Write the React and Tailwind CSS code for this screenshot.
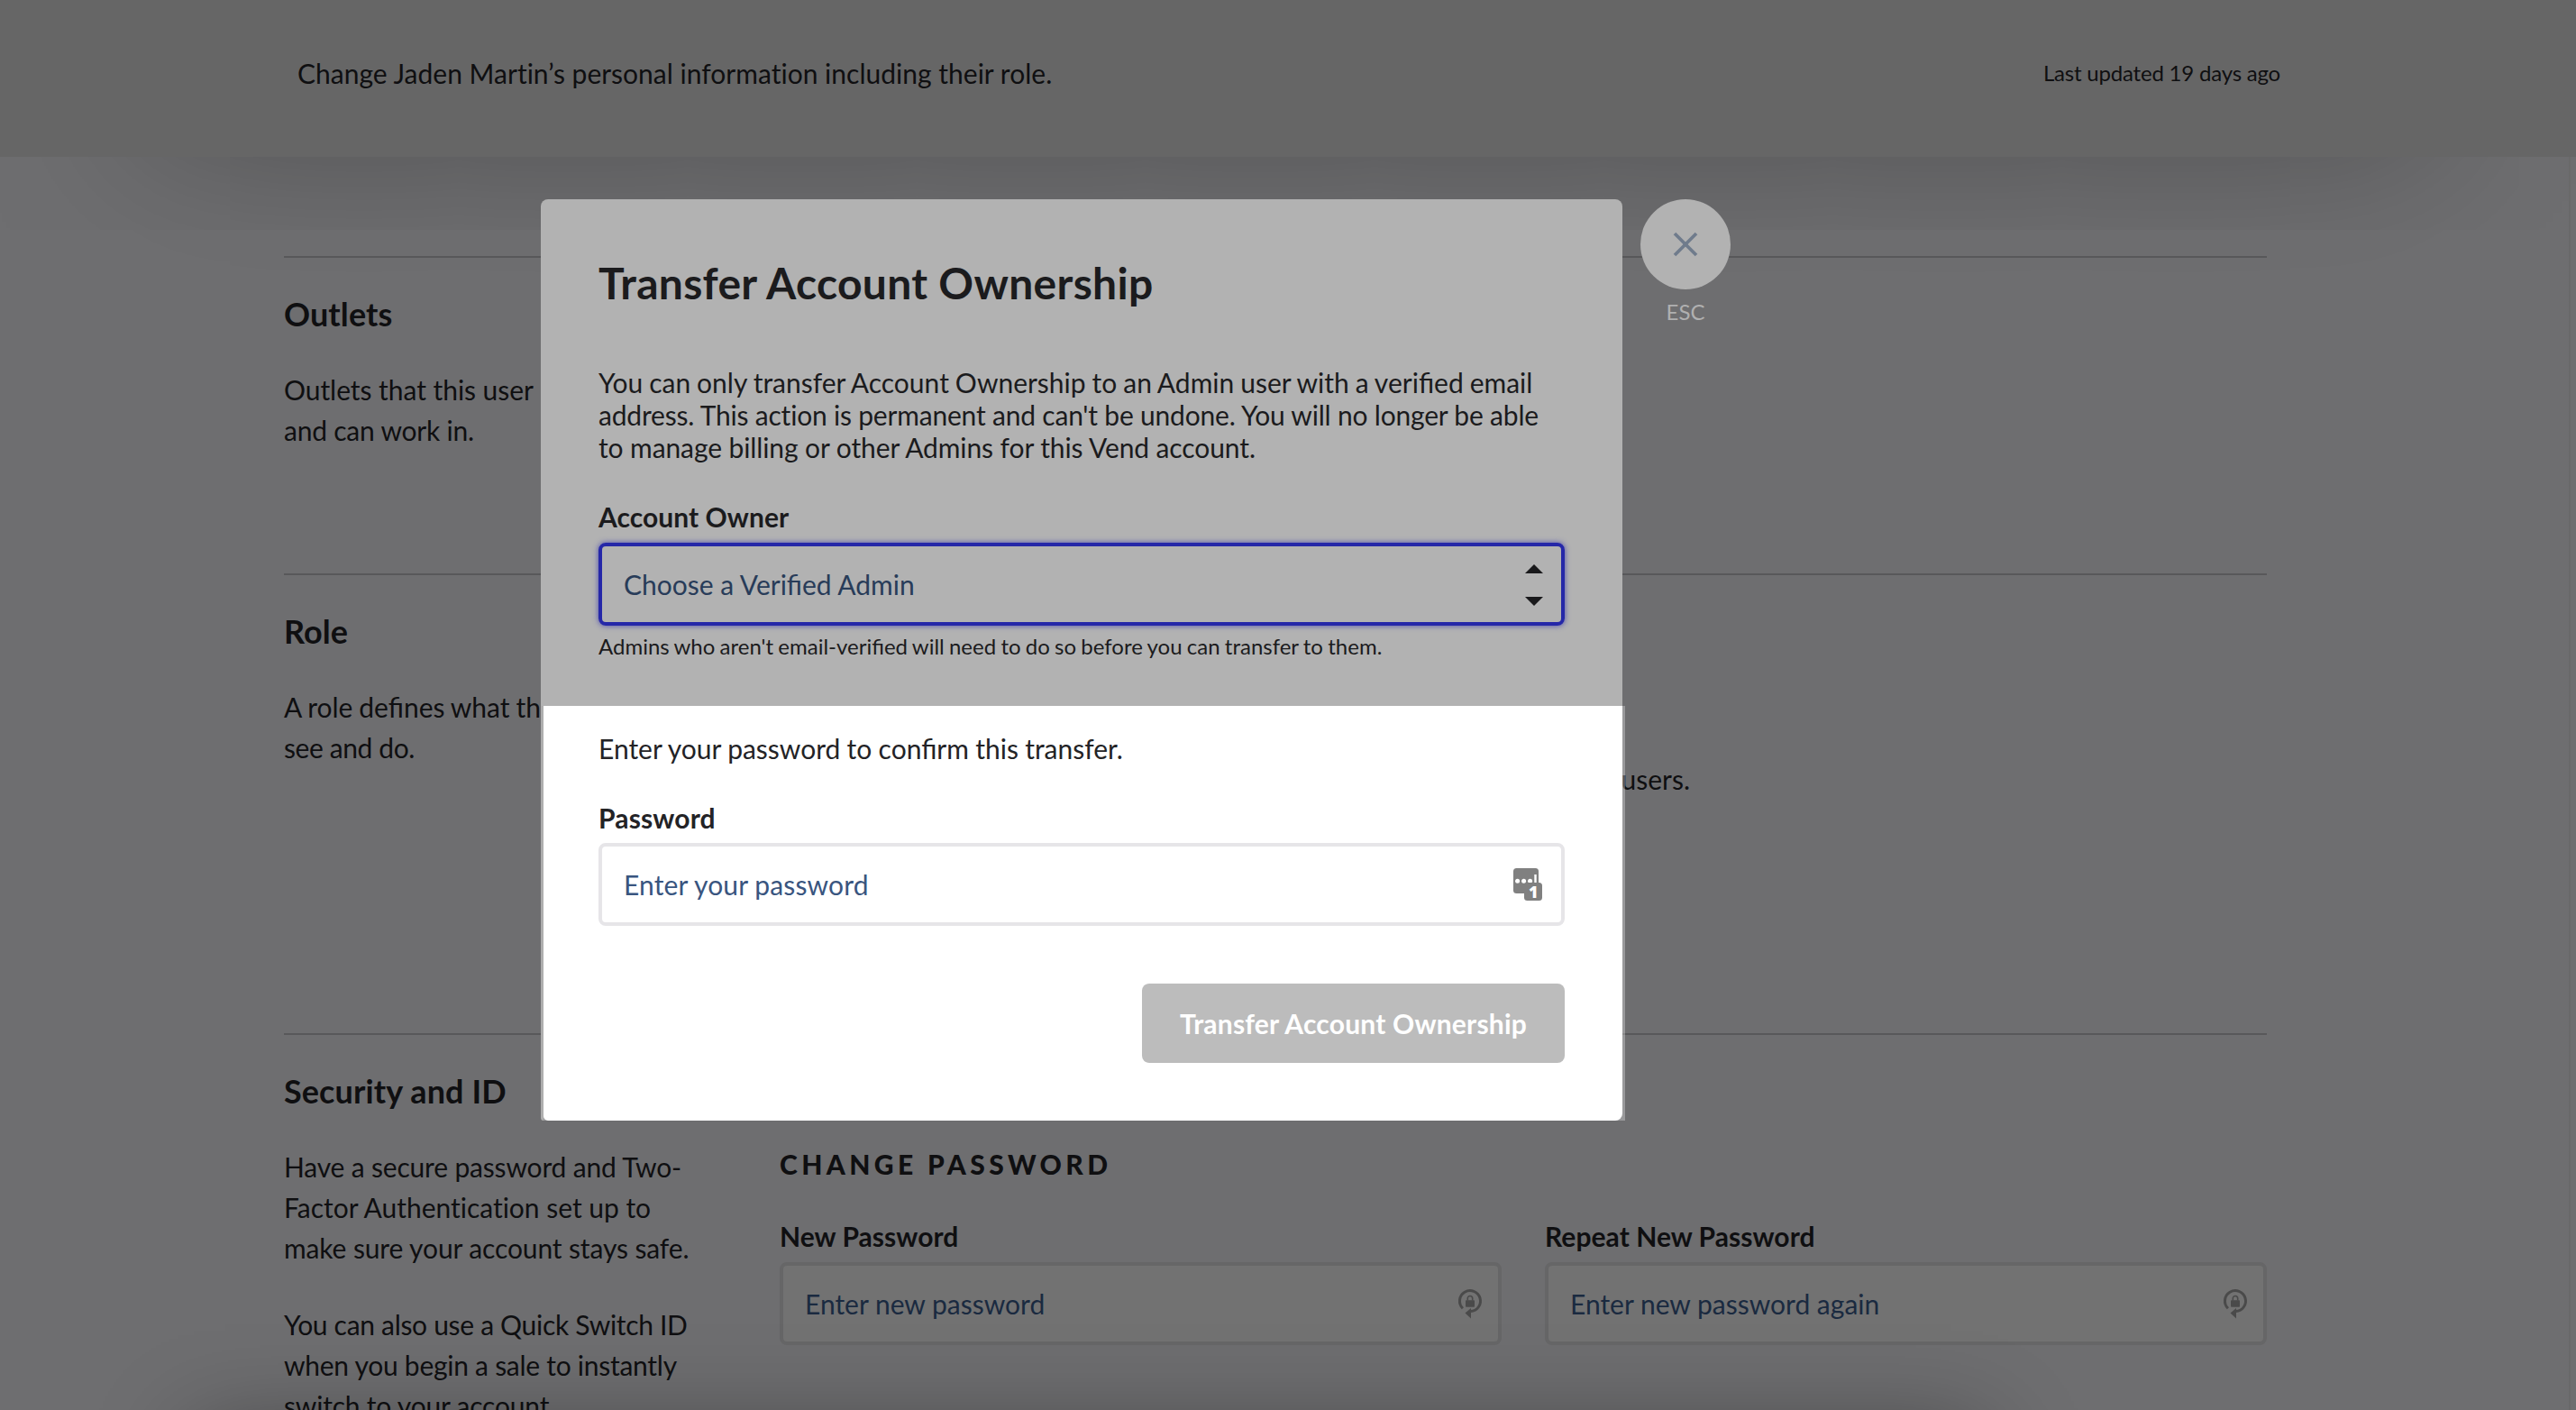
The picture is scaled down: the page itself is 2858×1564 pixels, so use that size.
import React from "react";
import { X } from "lucide-react";

function Section({ title, className, children }) {
  return (
    <div className={"border-t-2 border-[#58585a] " + className}>
      <div className="w-[500px] text-[30px] leading-[45px] whitespace-nowrap">
        <h2 className="mt-[37px] mb-[37px] text-[36px] leading-[50px] font-bold tracking-[0.1px]">
          {title}
        </h2>
        {children}
      </div>
    </div>
  );
}

function RotateLock() {
  return (
    <svg className="h-[36px] w-[30px]" viewBox="0 0 30 36" fill="none">
      <path
        d="M6.9 23.3 A11.5 11.5 0 1 1 15.5 26.6"
        stroke="#4a4a4a"
        strokeWidth="3"
      />
      <path d="M9.5 28.5 L16 23 L16 34.5 Z" fill="#4a4a4a" />
      <rect x="10" y="14.2" width="10" height="7.6" rx="0.8" fill="#4a4a4a" />
      <path
        d="M12.3 14.5 V12.2 A2.7 2.7 0 0 1 17.7 12.2 V14.5"
        stroke="#4a4a4a"
        strokeWidth="1.6"
      />
    </svg>
  );
}

function PasswordManager() {
  return (
    <svg className="h-[36px] w-[32px]" viewBox="0 0 32 36">
      <rect width="28" height="28" rx="3.5" fill="#808080" />
      <circle cx="4.6" cy="14.2" r="2.5" fill="#fff" />
      <circle cx="11.6" cy="14.2" r="2.5" fill="#fff" />
      <circle cx="18.6" cy="14.2" r="2.5" fill="#fff" />
      <rect x="23.3" y="7" width="2.4" height="10" fill="#fff" />
      <rect x="12" y="16" width="20" height="20" rx="3.5" fill="#808080" />
      <text
        x="22.3"
        y="33"
        fill="#fff"
        fontSize="18"
        fontWeight="800"
        textAnchor="middle"
        fontFamily="Open Sans, sans-serif"
      >
        1
      </text>
    </svg>
  );
}

function PasswordField({ label, placeholder }) {
  return (
    <div className="w-[801px]">
      <label className="block text-[30px] leading-[36px] font-bold tracking-[0.05px]">
        {label}
      </label>
      <div className="mt-[11px] flex h-[92px] items-center justify-between rounded-[8px] border-4 border-[#666667] bg-[#727272] pr-[16px] pl-[24px]">
        <span className="text-[30px] leading-[36px] text-[#1a2a40]">
          {placeholder}
        </span>
        <RotateLock />
      </div>
    </div>
  );
}

function Modal() {
  return (
    <div className="absolute top-[221px] left-[600px] h-[1022px] w-[1203px] text-[#1b1b1d]">
      <div className="h-[562px] w-[1200px] rounded-t-[8px] bg-[#b2b2b2] px-[64px] pt-[63px]">
        <h1 className="text-[48px] leading-[60px] font-bold tracking-[0.3px]">
          Transfer Account Ownership
        </h1>
        <p className="mt-[62px] text-[30px] leading-[36px] whitespace-nowrap">
          <span className="block [word-spacing:-0.7px]">
            You can only transfer Account Ownership to an Admin user with a
            verified email
          </span>
          <span className="block tracking-[-0.2px]">
            address. This action is permanent and can't be undone. You will no
            longer be able
          </span>
          <span className="block tracking-[-0.1px]">
            to manage billing or other Admins for this Vend account.
          </span>
        </p>
        <label className="mt-[41px] block text-[30px] leading-[36px] font-bold tracking-[0.05px]">
          Account Owner
        </label>
        <div className="mt-[11px] flex h-[92px] items-center justify-between rounded-[8px] border-4 border-[#2527a8] pr-[20px] pl-[24px] shadow-[0_0_6px_#4a4ab0]">
          <span className="text-[30px] leading-[36px] text-[#283c59]">
            Choose a Verified Admin
          </span>
          <svg
            className="mt-[2px] h-[46px] w-[20px]"
            viewBox="0 0 20 46"
            fill="#19191b"
          >
            <path d="M0 10 L10 0 L20 10 Z" />
            <path d="M0 36 L10 46 L20 36 Z" />
          </svg>
        </div>
        <p className="mt-[8px] text-[24px] leading-[30px] [word-spacing:-0.9px]">
          Admins who aren't email-verified will need to do so before you can
          transfer to them.
        </p>
      </div>
      <div className="flex h-[460px]">
        <div className="w-[3px] rounded-bl-[3px] bg-[#aeaeae]" />
        <div className="w-[1200px] bg-white/30">
          <div className="h-[460px] w-[1197px] rounded-br-[8px] rounded-bl-[5px] bg-white pt-[29px] pr-[64px] pl-[61px] text-[#232326]">
            <p className="text-[30px] leading-[36px] [word-spacing:-0.4px]">
              Enter your password to confirm this transfer.
            </p>
            <label className="mt-[41px] block text-[30px] leading-[36px] font-bold tracking-[0.15px]">
              Password
            </label>
            <div className="mt-[10px] flex h-[92px] items-center justify-between rounded-[8px] border-4 border-[#e6e5e8] pr-[21px] pl-[24px]">
              <span className="text-[30px] leading-[36px] tracking-[0.13px] text-[#39557f]">
                Enter your password
              </span>
              <PasswordManager />
            </div>
            <div className="mt-[64px] flex justify-end">
              <button className="h-[88px] w-[469px] rounded-[8px] bg-[#bcbcbc] text-[30px] font-bold tracking-[0.2px] text-white">
                Transfer Account Ownership
              </button>
            </div>
          </div>
        </div>
      </div>
    </div>
  );
}

export default function App() {
  return (
    <div className="relative h-[1564px] w-[2858px] overflow-hidden bg-[#6e6e70] font-[Lato,sans-serif] text-[#0f0f11]">
      <header className="flex h-[174px] items-center justify-between bg-[#666666] pr-[328px] pb-[12px] pl-[330px]">
        <p className="text-[30px] leading-[36px] tracking-[0.01px]">
          Change Jaden Martin’s personal information including their role.
        </p>
        <p className="text-[24px] leading-[30px] tracking-[-0.2px]">
          Last updated 19 days ago
        </p>
      </header>

      <div className="relative flex h-[1390px] overflow-hidden">
        {/* soft shadow under the header */}
        <div className="absolute -top-[445px] left-[170px] h-[400px] w-[2518px] shadow-[0_0_180px_rgba(0,0,0,0.5)]" />
        <main className="relative mt-[110px] ml-[315px] w-[2200px]">
          <Section title="Outlets" className="h-[352px]">
            <p className="tracking-[-0.05px]">Outlets that this user</p>
            <p className="tracking-[-0.22px]">and can work in.</p>
          </Section>
          <Section title="Role" className="h-[510px]">
            <p className="[word-spacing:-0.8px]">A role defines what they can</p>
            <p className="tracking-[-0.4px]">see and do.</p>
          </Section>
          <div className="flex border-t-2 border-[#58585a]">
            <Section
              title="Security and ID"
              className="-mt-[2px] w-[550px] shrink-0"
            >
              <p className="tracking-[-0.18px]">
                Have a secure password and Two-
              </p>
              <p>
                <span className="tracking-[-0.02px]">
                  Factor Authentication set up to
                </span>
              </p>
              <p className="tracking-[-0.12px]">
                make sure your account stays safe.
              </p>
              <p className="mt-[40px] tracking-[-0.31px]">
                You can also use a Quick Switch ID
              </p>
              <p className="tracking-[-0.27px]">
                when you begin a sale to instantly
              </p>
              <p className="tracking-[-0.2px]">switch to your account.</p>
            </Section>
            <div className="pt-[125px]">
              <h3 className="text-[30px] leading-[36px] font-black tracking-[4.4px]">
                CHANGE PASSWORD
              </h3>
              <div className="mt-[44px] flex gap-[48px]">
                <PasswordField
                  label="New Password"
                  placeholder="Enter new password"
                />
                <PasswordField
                  label="Repeat New Password"
                  placeholder="Enter new password again"
                />
              </div>
            </div>
          </div>
        </main>
        <p className="absolute top-[672px] right-[983px] text-[30px] leading-[36px]">
          users.
        </p>
        <div className="absolute top-0 right-[6px] h-full w-[2px] bg-[#69696a]" />
        {/* footer shadow, the bar itself sits below the fold */}
        <div className="absolute top-[1416px] left-[215px] h-[400px] w-[1985px] shadow-[0_0_100px_rgba(0,0,0,0.4)]" />
      </div>

      <Modal />
      <div className="absolute top-[221px] left-[1820px] flex w-[100px] flex-col items-center">
        <div className="flex h-[100px] w-[100px] items-center justify-center rounded-full bg-[#b2b2b2]">
          <X
            className="h-[48px] w-[48px] text-[#6f7b8c]"
            strokeWidth={1.9}
            strokeLinecap="butt"
          />
        </div>
        <span className="mt-[10px] text-[24px] leading-[30px] text-[#b0b0b0]">
          ESC
        </span>
      </div>
    </div>
  );
}
